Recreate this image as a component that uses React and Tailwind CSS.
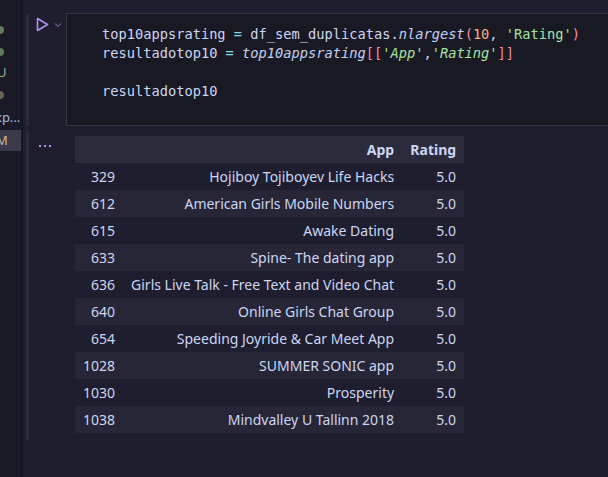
import React from "react";

const rows = [
  ["329", "Hojiboy Tojiboyev Life Hacks"],
  ["612", "American Girls Mobile Numbers"],
  ["615", "Awake Dating"],
  ["633", "Spine- The dating app"],
  ["636", "Girls Live Talk - Free Text and Video Chat"],
  ["640", "Online Girls Chat Group"],
  ["654", "Speeding Joyride & Car Meet App"],
  ["1028", "SUMMER SONIC app"],
  ["1030", "Prosperity"],
  ["1038", "Mindvalley U Tallinn 2018"],
];

function Sidebar() {
  return (
    <div className="w-[22px] shrink-0 bg-[#1a1a26] relative overflow-hidden text-[13px] font-['Noto_Sans',sans-serif]">
      <div className="absolute left-[-4px] top-[26px] h-[8px] w-[8px] rounded-full bg-[#5f7a5c]" />
      <div className="absolute left-[-4px] top-[48px] h-[8px] w-[8px] rounded-full bg-[#5f7a5c]" />
      <div className="absolute left-[-3px] top-[63px] leading-[18px] text-[#8fb580]">U</div>
      <div className="absolute left-[-4px] top-[91px] h-[8px] w-[8px] rounded-full bg-[#6b6455]" />
      <div className="absolute left-[-5px] top-[108px] leading-[18px] text-[#a9b8e0]">xp...</div>
      <div className="absolute left-0 top-[130px] h-[21px] w-[21px] bg-[#3a3a4a]">
        <div className="ml-[-4px] leading-[21px] text-[#c9b89a]">M</div>
      </div>
    </div>
  );
}

export default function App() {
  return (
    <div className="flex h-[477px] w-[608px] overflow-hidden bg-[#1e1e2e]">
      <Sidebar />
      <div className="flex flex-1 flex-col pt-[13px] border-l border-[#16161f]">
        <div className="flex h-[113px]">
          <div className="ml-[3px] w-[3px] rounded-sm bg-[#2b2b3b]" />
          <div className="w-[37px] shrink-0 pl-[7px] pt-[4px] flex items-start gap-[5px]">
            <svg width="13" height="15" viewBox="0 0 13 15">
              <path d="M1.5 1.5 L11.5 7.5 L1.5 13.5 Z" fill="none" stroke="#b48ef0" strokeWidth="1.6" strokeLinejoin="round" />
            </svg>
            <svg width="8" height="6" viewBox="0 0 8 6" className="mt-[5px]">
              <path d="M1 1.5 L4 4.5 L7 1.5" fill="none" stroke="#9b7fd6" strokeWidth="1" />
            </svg>
          </div>
          <div className="flex-1 border border-r-0 border-[#343442] bg-[#191923] pl-[35px] pt-[11px] font-['DejaVu_Sans_Mono',monospace] text-[13.7px] leading-[19px] text-[#cdd6f4] whitespace-pre">
            <div>
              top10appsrating <span className="text-[#89dceb]">=</span> df_sem_duplicatas.<span className="italic text-[#c6d0f5]">nlargest</span>
              <span className="text-[#f38ba8]">(</span>
              <span className="text-[#fab387]">10</span>, <span className="text-[#a6e3a1]">'Rating'</span>
              <span className="text-[#f38ba8]">)</span>
            </div>
            <div>
              resultadotop10 <span className="text-[#89dceb]">=</span> <span className="italic text-[#c6d0f5]">top10appsrating</span>
              <span className="text-[#f38ba8]">[[</span>
              <span className="italic text-[#a6e3a1]">'App'</span>,<span className="italic text-[#a6e3a1]">'Rating'</span>
              <span className="text-[#f38ba8]">]]</span>
            </div>
            <div>&nbsp;</div>
            <div>resultadotop10</div>
          </div>
        </div>
        <div className="mt-[5px] flex h-[310px]">
          <div className="ml-[3px] w-[3px] rounded-sm bg-[#2b2b3b]" />
          <div className="w-[46px] shrink-0 pl-[10px] pt-[14px] flex gap-[3px]">
            <span className="h-[2px] w-[2px] bg-[#b48ef0]" />
            <span className="h-[2px] w-[2px] bg-[#b48ef0]" />
            <span className="h-[2px] w-[2px] bg-[#b48ef0]" />
          </div>
          <div className="pt-[5px]">
            <table className="border-collapse font-['Noto_Sans',sans-serif] text-[14px] text-[#cdd6f4]">
              <thead>
                <tr className="h-[27px] bg-[#2b2b3b]">
                  <th className="w-[48px]"></th>
                  <th className="w-[279px] px-2 text-right font-bold">App</th>
                  <th className="w-[62px] px-2 text-right font-bold">Rating</th>
                </tr>
              </thead>
              <tbody>
                {rows.map(([i, name], k) => (
                  <tr key={i} className={"h-[27px] " + (k % 2 === 1 ? "bg-[#262636]" : "")}>
                    <td className="px-2 text-right">{i}</td>
                    <td className="px-2 text-right whitespace-nowrap">{name}</td>
                    <td className="px-2 text-right">5.0</td>
                  </tr>
                ))}
              </tbody>
            </table>
          </div>
        </div>
      </div>
    </div>
  );
}
